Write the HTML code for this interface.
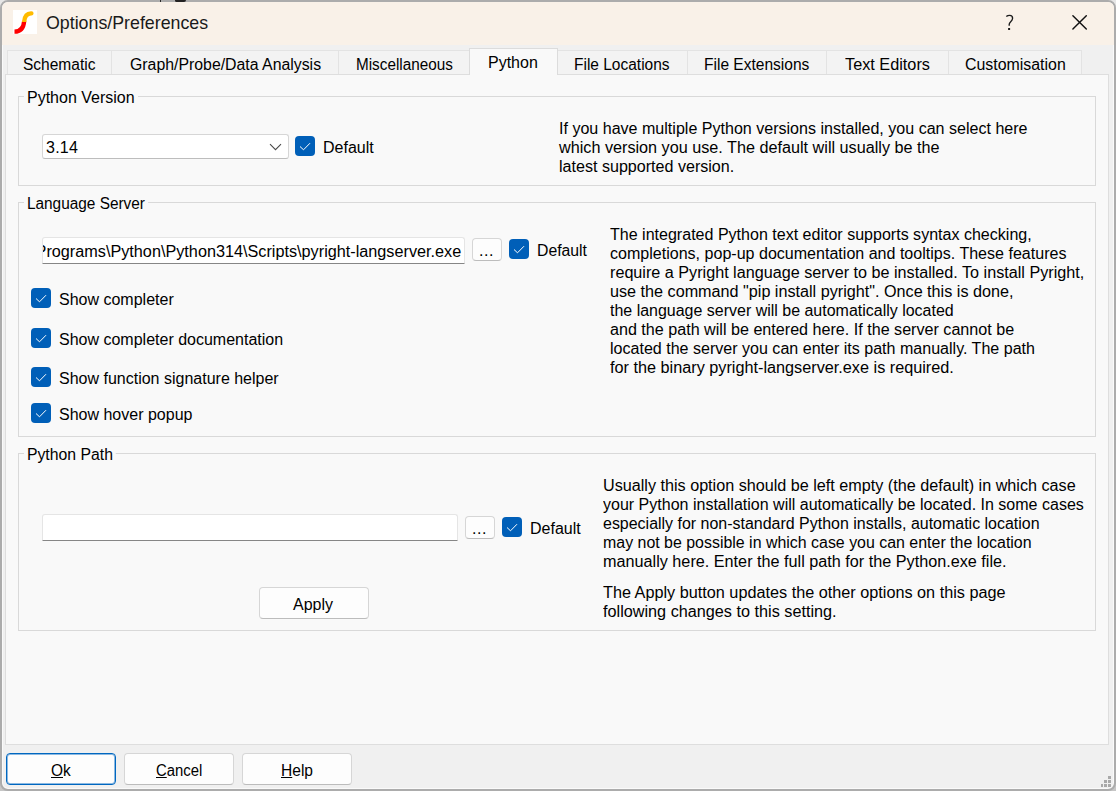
<!DOCTYPE html>
<html><head><meta charset="utf-8">
<style>
*{margin:0;padding:0;box-sizing:border-box}
html,body{width:1116px;height:791px;overflow:hidden;background:linear-gradient(#e6e6e6,#e6e6e6 700px,#c6c6c6 780px);font-family:"Liberation Sans",sans-serif;color:#000}
#win{position:absolute;left:0;top:0;width:1116px;height:791px;border:2px solid #acacac;border-radius:8px;background:#f0f0f0;overflow:hidden;box-shadow:inset 0 0 0 1px #fafafa}
.a{position:absolute}
.t{position:absolute;white-space:pre;font-size:16px;line-height:19px}
#title{position:absolute;left:0;top:0;width:1116px;height:43px;background:#f9f1e8}
.tab{position:absolute;top:50px;height:25px;background:#f3f3f3;border:1px solid #e3e3e3;border-bottom:none}
.sel{top:48px;height:27px;background:#f9f9f9;border-color:#dcdcdc;z-index:2}
#panel{position:absolute;left:5px;top:74px;width:1104px;height:671px;background:#f9f9f9;border:1px solid #dedede}
.grp{position:absolute;left:18px;width:1078px;border:1px solid #d9d9d9}
.gt{position:absolute;white-space:pre;font-size:16px;line-height:19px;background:#f9f9f9;padding:0 3px}
.cb{position:absolute;width:20px;height:20px;background:#005fb8;border-radius:4px}
.cb svg{position:absolute;left:0;top:0}
.edit{position:absolute;background:#fff;border:1px solid #e5e5e5;border-bottom:1px solid #868686;border-radius:3px 3px 0 0;overflow:hidden}
.btn{position:absolute;background:#fdfdfd;border:1px solid #d6d6d6;border-bottom-color:#bcbcbc;border-radius:4px}
.desc{position:absolute;white-space:pre;font-size:16px;line-height:19px}
</style></head><body>
<div id="win">
 <div id="title"></div>
</div>
<!-- outer elements absolutely in page coords -->
<div class="a" style="left:160px;top:0;width:1px;height:2px;background:#2a2a2a;z-index:9"></div>
<div class="a" style="left:175px;top:0;width:11px;height:2px;background:#222;border-radius:0 0 5px 4px;z-index:9"></div>
<svg class="a" style="left:13px;top:10px" width="24" height="24" viewBox="0 0 24 24">
 <defs><clipPath id="ctop"><rect x="0" y="0" width="24" height="12"/></clipPath></defs>
 <rect width="24" height="24" fill="#fff"/>
 <path d="M11.2 11 C10.7 17 8.5 21.6 1.5 21.7" stroke="#ff0000" stroke-width="4.3" fill="none"/>
 <path d="M18.4 3.4 C13.6 3.2 11.7 6.5 11.2 11.5 L11.1 13" stroke="#ffbb00" stroke-width="4.3" fill="none" stroke-linecap="round" clip-path="url(#ctop)"/>
</svg>
<div class="a" style="left:46px;top:13px;font-size:17.8px;line-height:21px;white-space:pre;color:#1a1a1a">Options/Preferences</div>
<svg class="a" style="left:1004px;top:13px" width="12" height="19" viewBox="0 0 12 19"><path d="M2.3 3.6 C3.3 2.6 4.5 2.3 5.7 2.3 C7.5 2.3 8.6 3.6 8.6 5.3 C8.6 6.9 7.5 8 6.5 9 C5.7 9.8 5.2 10.6 5.2 11.6 L5.2 12.7" stroke="#1a1a1a" stroke-width="1.35" fill="none"/><rect x="4.1" y="15" width="2" height="2" fill="#1a1a1a"/></svg>
<svg class="a" style="left:1070px;top:13px" width="20" height="20" viewBox="0 0 20 20"><path d="M2.9 2.7 L16.3 16.1 M16.3 2.7 L2.9 16.1" stroke="#111" stroke-width="1.45" stroke-linecap="round"/></svg>

<div class="tab" style="left:7px;width:105px"></div>
<div class="tab" style="left:111px;width:228px"></div>
<div class="tab" style="left:338px;width:132px"></div>
<div class="tab sel" style="left:469px;width:89px"></div>
<div class="tab" style="left:557px;width:131px"></div>
<div class="tab" style="left:687px;width:140px"></div>
<div class="tab" style="left:826px;width:123px"></div>
<div class="tab" style="left:948px;width:134px"></div>
<div id="panel"></div>
<div class="a" style="left:470px;top:73px;width:87px;height:3px;background:#f9f9f9;z-index:3"></div>
<div class="t" style="left:23px;top:55px;transform:scaleX(0.97);transform-origin:0 0">Schematic</div>
<div class="t" style="left:130px;top:55px;transform:scaleX(0.99);transform-origin:0 0">Graph/Probe/Data Analysis</div>
<div class="t" style="left:356px;top:55px;transform:scaleX(0.955);transform-origin:0 0">Miscellaneous</div>
<div class="t" style="left:488px;top:53px;z-index:4">Python</div>
<div class="t" style="left:574px;top:55px;transform:scaleX(0.968);transform-origin:0 0">File Locations</div>
<div class="t" style="left:704px;top:55px;transform:scaleX(0.971);transform-origin:0 0">File Extensions</div>
<div class="t" style="left:845px;top:55px;transform:scaleX(1.016);transform-origin:0 0">Text Editors</div>
<div class="t" style="left:965px;top:55px;transform:scaleX(0.994);transform-origin:0 0">Customisation</div>

<!-- Group 1 -->
<div class="grp" style="top:96px;height:90px"></div>
<div class="gt" style="left:24px;top:88px">Python Version</div>
<div class="edit" style="left:42px;top:134px;width:247px;height:25px;border-radius:3px;border-color:#d6d6d6;border-bottom-color:#bdbdbd"></div>
<div class="t" style="left:46px;top:138px;letter-spacing:0.25px">3.14</div>
<svg class="a" style="left:269px;top:143px" width="13" height="8" viewBox="0 0 13 8"><path d="M1 1.2 L6.5 6.7 L12 1.2" stroke="#4a4a4a" stroke-width="1.1" fill="none"/></svg>
<div class="cb" style="left:295px;top:136px"><svg width="20" height="20"><path d="M5 10.5 L8.5 13.8 L15 7.2" stroke="#fff" stroke-width="1" fill="none"/></svg></div>
<div class="t" style="left:323px;top:138px">Default</div>
<div class="t" style="left:559px;top:119px;transform:scaleX(1.0034);transform-origin:0 0">If you have multiple Python versions installed, you can select here</div>
<div class="t" style="left:559px;top:138px;transform:scaleX(1.0123);transform-origin:0 0">which version you use. The default will usually be the</div>
<div class="t" style="left:559px;top:157px;transform:scaleX(1.0052);transform-origin:0 0">latest supported version.</div>
<div class="t" style="left:610px;top:225px;transform:scaleX(1.0024);transform-origin:0 0">The integrated Python text editor supports syntax checking,</div>
<div class="t" style="left:610px;top:244px;transform:scaleX(1.0029);transform-origin:0 0">completions, pop-up documentation and tooltips. These features</div>
<div class="t" style="left:610px;top:263px;transform:scaleX(1.0105);transform-origin:0 0">require a Pyright language server to be installed. To install Pyright,</div>
<div class="t" style="left:610px;top:282px;transform:scaleX(1.0108);transform-origin:0 0">use the command &quot;pip install pyright&quot;. Once this is done,</div>
<div class="t" style="left:610px;top:301px;transform:scaleX(0.9985);transform-origin:0 0">the language server will be automatically located</div>
<div class="t" style="left:610px;top:320px;transform:scaleX(1.0075);transform-origin:0 0">and the path will be entered here. If the server cannot be</div>
<div class="t" style="left:610px;top:339px;transform:scaleX(1.0031);transform-origin:0 0">located the server you can enter its path manually. The path</div>
<div class="t" style="left:610px;top:358px;transform:scaleX(1.0148);transform-origin:0 0">for the binary pyright-langserver.exe is required.</div>
<div class="t" style="left:603px;top:476px;transform:scaleX(1.0103);transform-origin:0 0">Usually this option should be left empty (the default) in which case</div>
<div class="t" style="left:603px;top:495px;transform:scaleX(1.0012);transform-origin:0 0">your Python installation will automatically be located. In some cases</div>
<div class="t" style="left:603px;top:514px;transform:scaleX(0.9977);transform-origin:0 0">especially for non-standard Python installs, automatic location</div>
<div class="t" style="left:603px;top:533px;transform:scaleX(0.9956);transform-origin:0 0">may not be possible in which case you can enter the location</div>
<div class="t" style="left:603px;top:552px;transform:scaleX(1.0128);transform-origin:0 0">manually here. Enter the full path for the Python.exe file.</div>
<div class="t" style="left:603px;top:583px;transform:scaleX(1.0146);transform-origin:0 0">The Apply button updates the other options on this page</div>
<div class="t" style="left:603px;top:602px;transform:scaleX(1.0140);transform-origin:0 0">following changes to this setting.</div>


<!-- Group 2 -->
<div class="grp" style="top:202px;height:235px"></div>
<div class="gt" style="left:24px;top:194px;transform:scaleX(0.962);transform-origin:0 0">Language Server</div>
<div class="edit" style="left:42px;top:237px;width:423px;height:27px"><div class="t" style="right:3px;top:4px;transform:scaleX(1.014);transform-origin:right">C:\Programs\Python\Python314\Scripts\pyright-langserver.exe</div></div>
<div class="btn" style="left:472px;top:238px;width:30px;height:23px"></div>
<div class="t" style="left:479px;top:241px;letter-spacing:0.5px">...</div>
<div class="cb" style="left:509px;top:239px"><svg width="20" height="20"><path d="M5 10.5 L8.5 13.8 L15 7.2" stroke="#fff" stroke-width="1" fill="none"/></svg></div>
<div class="t" style="left:537px;top:241px;transform:scaleX(0.986);transform-origin:0 0">Default</div>
<div class="cb" style="left:31px;top:288px"><svg width="20" height="20"><path d="M5 10.5 L8.5 13.8 L15 7.2" stroke="#fff" stroke-width="1" fill="none"/></svg></div>
<div class="t" style="left:59px;top:290px">Show completer</div>
<div class="cb" style="left:31px;top:328px"><svg width="20" height="20"><path d="M5 10.5 L8.5 13.8 L15 7.2" stroke="#fff" stroke-width="1" fill="none"/></svg></div>
<div class="t" style="left:59px;top:330px">Show completer documentation</div>
<div class="cb" style="left:31px;top:367px"><svg width="20" height="20"><path d="M5 10.5 L8.5 13.8 L15 7.2" stroke="#fff" stroke-width="1" fill="none"/></svg></div>
<div class="t" style="left:59px;top:369px">Show function signature helper</div>
<div class="cb" style="left:31px;top:403px"><svg width="20" height="20"><path d="M5 10.5 L8.5 13.8 L15 7.2" stroke="#fff" stroke-width="1" fill="none"/></svg></div>
<div class="t" style="left:59px;top:405px">Show hover popup</div>


<!-- Group 3 -->
<div class="grp" style="top:453px;height:178px"></div>
<div class="gt" style="left:24px;top:445px;transform:scaleX(0.986);transform-origin:0 0">Python Path</div>
<div class="edit" style="left:42px;top:514px;width:416px;height:27px"></div>
<div class="btn" style="left:465px;top:516px;width:30px;height:23px"></div>
<div class="t" style="left:472px;top:519px;letter-spacing:0.5px">...</div>
<div class="cb" style="left:502px;top:517px"><svg width="20" height="20"><path d="M5 10.5 L8.5 13.8 L15 7.2" stroke="#fff" stroke-width="1" fill="none"/></svg></div>
<div class="t" style="left:530px;top:519px">Default</div>
<div class="btn" style="left:259px;top:587px;width:110px;height:32px"></div>
<div class="t" style="left:293px;top:595px">Apply</div>



<!-- size grip -->
<div class="a" style="left:1108px;top:776px;width:3px;height:3px;background:#a9a9a9"></div>
<div class="a" style="left:1104px;top:780px;width:3px;height:3px;background:#a9a9a9"></div>
<div class="a" style="left:1108px;top:780px;width:3px;height:3px;background:#a9a9a9"></div>
<div class="a" style="left:1101px;top:784px;width:2px;height:3px;background:#a9a9a9"></div>
<div class="a" style="left:1104px;top:784px;width:3px;height:3px;background:#a9a9a9"></div>
<div class="a" style="left:1108px;top:784px;width:3px;height:3px;background:#a9a9a9"></div>
<!-- bottom buttons -->
<div class="btn" style="left:6px;top:753px;width:110px;height:32px;border:1px solid #0067c0;box-shadow:inset 0 0 0 1px rgba(0,103,192,0.45)"></div>
<div class="t" style="left:51px;top:761px;transform:scaleX(0.965);transform-origin:0 0"><u>O</u>k</div>
<div class="btn" style="left:124px;top:753px;width:110px;height:32px"></div>
<div class="t" style="left:156px;top:761px;transform:scaleX(0.93);transform-origin:0 0"><u>C</u>ancel</div>
<div class="btn" style="left:242px;top:753px;width:110px;height:32px"></div>
<div class="t" style="left:281px;top:761px;transform:scaleX(0.972);transform-origin:0 0"><u>H</u>elp</div>
</body></html>
